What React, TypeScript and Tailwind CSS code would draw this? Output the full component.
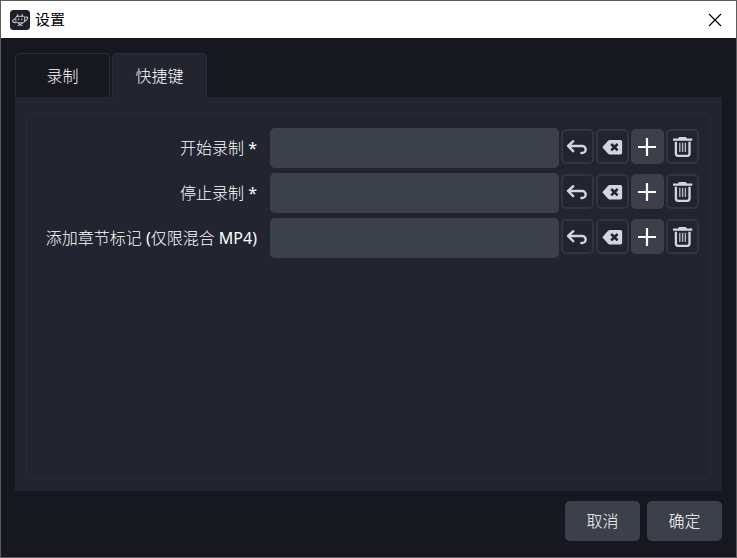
import { useState } from 'react';
import type { ReactNode } from 'react';

const TABS = ['录制', '快捷键'];

const HOTKEYS = [
  { id: 'start', label: '开始录制 *' },
  { id: 'stop', label: '停止录制 *' },
  { id: 'chapter', label: '添加章节标记 (仅限混合 MP4)' },
];

function AppIcon() {
  return (
    <svg viewBox="0 0 20 20" className="h-5 w-5 shrink-0" aria-hidden="true">
      <rect width="20" height="20" rx="3.5" fill="#1d202b" />
      <g fill="none" stroke="#c9cbd2" strokeLinecap="round" strokeLinejoin="round">
        <path d="M7 6.3h6.4q1.2 0 1.2 1.3v3.2q0 2-2 2H7.8q-2 0-2-2V7.6q0-1.3 1.2-1.3z" strokeWidth="1" />
        <path d="M7.6 6V4.6M12.2 6V4.4" strokeWidth="1.1" />
        <path d="M5 8.8C2 9.8 1.6 12.6 5.4 12.6M14.9 7.2c3.8-1.2 3.8 2 -.4 4.4" strokeWidth="1.1" />
        <path d="M8.6 8.8v1.2M11.8 8.8v1.2" strokeWidth="1" />
        <path d="M8.4 15.4l3.8-1.8M8.6 13.6l3.4 1.8" strokeWidth="1.1" />
      </g>
    </svg>
  );
}

function UndoIcon() {
  return (
    <svg viewBox="0 0 23 23" className="h-[23px] w-[23px]" aria-hidden="true">
      <path
        d="M7.3 6.2L2 11l5.2 5.2M2.4 11H16.2a3.5 3.5 0 0 1 0 7h-.8"
        fill="none"
        stroke="#d4d5de"
        strokeWidth="2.4"
        strokeLinecap="round"
        strokeLinejoin="round"
      />
    </svg>
  );
}

function ClearIcon() {
  return (
    <svg viewBox="0 0 23 23" className="h-[23px] w-[23px]" aria-hidden="true">
      <path d="M1.3 12.2L6.8 6q.9-1 2-1H19.5q1.6 0 1.6 1.6v11.2q0 1.7-1.6 1.7H8.8q-1.1 0-2-1z" fill="#d4d5de" />
      <path d="M10.2 9l6.4 6.4M16.6 9l-6.4 6.4" stroke="#222430" strokeWidth="2.5" />
    </svg>
  );
}

function PlusIcon() {
  return (
    <svg viewBox="0 0 23 23" className="h-[23px] w-[23px]" aria-hidden="true">
      <path d="M11 3v18M2 12h18" stroke="#fff" strokeWidth="2.2" />
    </svg>
  );
}

function TrashIcon() {
  return (
    <svg viewBox="0 0 23 23" className="h-[23px] w-[23px]" aria-hidden="true">
      <path d="M2 3.6h5L8.2 2h6.6L16 3.6h5.3v2.1H2z" fill="#d4d5de" />
      <path d="M4.9 6.8v11.8q0 2.2 2.2 2.2h9.2q2.2 0 2.2-2.2V6.8" fill="none" stroke="#d4d5de" strokeWidth="2.3" />
      <path d="M8.8 7.7V17M11.6 7.7V17M14.4 7.7V17" stroke="#b5b7c2" strokeWidth="1.4" />
    </svg>
  );
}

function IconButton({ label, filled, children }: { label: string; filled?: boolean; children: ReactNode }) {
  return (
    <button
      type="button"
      aria-label={label}
      className={`flex h-[35px] w-[33px] items-center justify-center rounded-[5px] border-2 ${
        filled ? 'border-[#3c404b] bg-[#3c404b]' : 'border-[#32343f]'
      }`}
    >
      {children}
    </button>
  );
}

function HotkeyRow({ id, label }: { id: string; label: string }) {
  return (
    <div className="flex gap-[2px]">
      <label htmlFor={id} className="mr-[11px] w-[215px] shrink-0 text-right leading-10 whitespace-nowrap">
        {label}
      </label>
      <input id={id} type="text" className="h-10 min-w-0 flex-1 rounded-[5px] bg-[#3c404b] px-2 outline-none" />
      <div className="mt-px flex gap-[2px]">
        <IconButton label="还原">
          <UndoIcon />
        </IconButton>
        <IconButton label="清除">
          <ClearIcon />
        </IconButton>
        <IconButton label="添加" filled>
          <PlusIcon />
        </IconButton>
        <IconButton label="删除">
          <TrashIcon />
        </IconButton>
      </div>
    </div>
  );
}

export default function App() {
  const [active, setActive] = useState(1);

  return (
    <div className="flex min-h-screen flex-col border border-[#5c5c5c] bg-[#171720] font-['Noto_Sans','Noto_Sans_CJK_SC_Light','Noto_Sans_CJK_SC',sans-serif] text-base text-white">
      <header className="flex h-[37px] items-center bg-white pr-[14px] pl-[9px] text-black">
        <AppIcon />
        <h1 className="ml-[5px] font-['Noto_Sans_CJK_SC',sans-serif] text-[15px]">设置</h1>
        <button type="button" aria-label="关闭" className="ml-auto">
          <svg viewBox="0 0 14 14" className="h-[14px] w-[14px]" aria-hidden="true">
            <path d="M1 1l12 12M13 1L1 13" stroke="#000" strokeWidth="1.1" />
          </svg>
        </button>
      </header>

      <main className="flex flex-1 flex-col px-[14px] pt-[15px] pb-4">
        <div role="tablist" className="flex gap-[2px]">
          {TABS.map((tab, i) => (
            <button
              key={tab}
              type="button"
              role="tab"
              aria-selected={i === active}
              onClick={() => setActive(i)}
              className={`h-11 w-[95px] rounded-t-[5px] border border-b-0 border-[#2b2d3a] ${
                i === active ? 'bg-[#222430]' : 'bg-[#171720]'
              }`}
            >
              {tab}
            </button>
          ))}
        </div>

        <section role="tabpanel" className="flex flex-1 flex-col bg-[#222430] px-[11px] pt-4 pb-3">
          <div className="flex flex-1 flex-col gap-[5px] rounded-[5px] border border-[#282a35] pt-[14px] pr-[11px] pl-[15px]">
            {HOTKEYS.map((hotkey) => (
              <HotkeyRow key={hotkey.id} {...hotkey} />
            ))}
          </div>
        </section>

        <footer className="mt-[10px] flex justify-end gap-[7px]">
          <button type="button" className="h-10 w-[75px] rounded-[5px] bg-[#3c404b]">
            取消
          </button>
          <button type="button" className="h-10 w-[75px] rounded-[5px] bg-[#3c404b]">
            确定
          </button>
        </footer>
      </main>
    </div>
  );
}
